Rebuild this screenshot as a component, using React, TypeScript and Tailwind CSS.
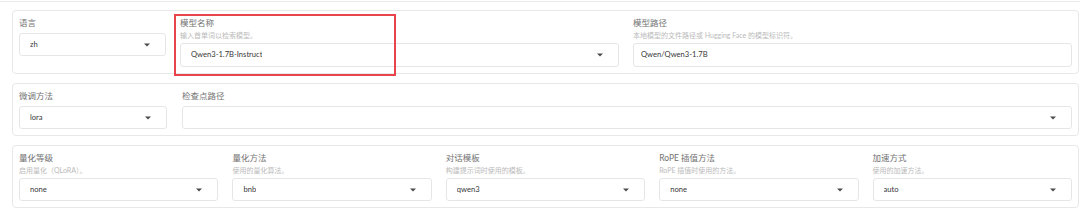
import React from 'react';

const font = { fontFamily: 'Lato, "Noto Sans CJK SC", sans-serif' };

function Caret() {
  return (
    <svg width="6" height="4" viewBox="0 0 6 4" className="shrink-0">
      <path d="M0 0.5 H6 L3 3.5 Z" fill="#4b4b4b" />
    </svg>
  );
}

interface FieldProps {
  label: string;
  hint?: string;
  value?: string;
  dropdown?: boolean;
  boxClass?: string;
}

function Field({ label, hint, value = '', dropdown = true, boxClass = 'h-[23px]' }: FieldProps) {
  return (
    <div className="flex min-w-0 flex-col">
      <div className="h-[12px] text-[8.5px] leading-[12px] text-[#727272]">{label}</div>
      {hint ? <div className="mt-[1px] h-[10px] text-[7px] leading-[10px] text-[#bababa]">{hint}</div> : null}
      <div
        className={`${hint ? 'mt-[3px]' : 'mt-[4px]'} flex ${boxClass} items-center justify-between rounded-[3px] border border-[#e6e6e6] bg-white ${
          dropdown ? 'pl-[10px] pr-[15px]' : 'px-[7px]'
        }`}
      >
        <span className="truncate text-[7.6px] text-[#383838]">{value}</span>
        {dropdown ? <Caret /> : null}
      </div>
    </div>
  );
}

function Panel({ className, children }: { className: string; children: React.ReactNode }) {
  return (
    <div className={`ml-[12px] mr-[1px] rounded-[4px] border border-[#e8e8e8] bg-white px-[6px] pb-[6px] pt-[6px] ${className}`}>
      {children}
    </div>
  );
}

export default function App() {
  return (
    <div className="relative h-[212px] w-[1080px] overflow-hidden bg-white" style={font}>
      <div className="h-[2px] border-b border-[#ececec]" />
      <div className="mt-[8px] flex flex-col gap-[9px]">
        <Panel className="grid grid-cols-[147px_1fr_1fr] gap-x-[14px]">
          <Field label="语言" value="zh" />
          <Field label="模型名称" hint="输入首单词以检索模型。" value="Qwen3-1.7B-Instruct" boxClass="h-[24px]" />
          <Field
            label="模型路径"
            hint="本地模型的文件路径或 Hugging Face 的模型标识符。"
            value="Qwen/Qwen3-1.7B"
            dropdown={false}
            boxClass="h-[24px]"
          />
        </Panel>
        <Panel className="grid grid-cols-[148px_1fr] gap-x-[15px]">
          <Field label="微调方法" value="lora" />
          <Field label="检查点路径" />
        </Panel>
        <Panel className="grid grid-cols-5 gap-x-[14px]">
          <Field label="量化等级" hint="启用量化（QLoRA）。" value="none" />
          <Field label="量化方法" hint="使用的量化算法。" value="bnb" />
          <Field label="对话模板" hint="构建提示词时使用的模板。" value="qwen3" />
          <Field label="RoPE 插值方法" hint="RoPE 插值时使用的方法。" value="none" />
          <Field label="加速方式" hint="使用的加速方法。" value="auto" />
        </Panel>
      </div>
      <div className="pointer-events-none absolute left-[174px] top-[14px] h-[62px] w-[222px] border-2 border-[#e8444c]" />
    </div>
  );
}
